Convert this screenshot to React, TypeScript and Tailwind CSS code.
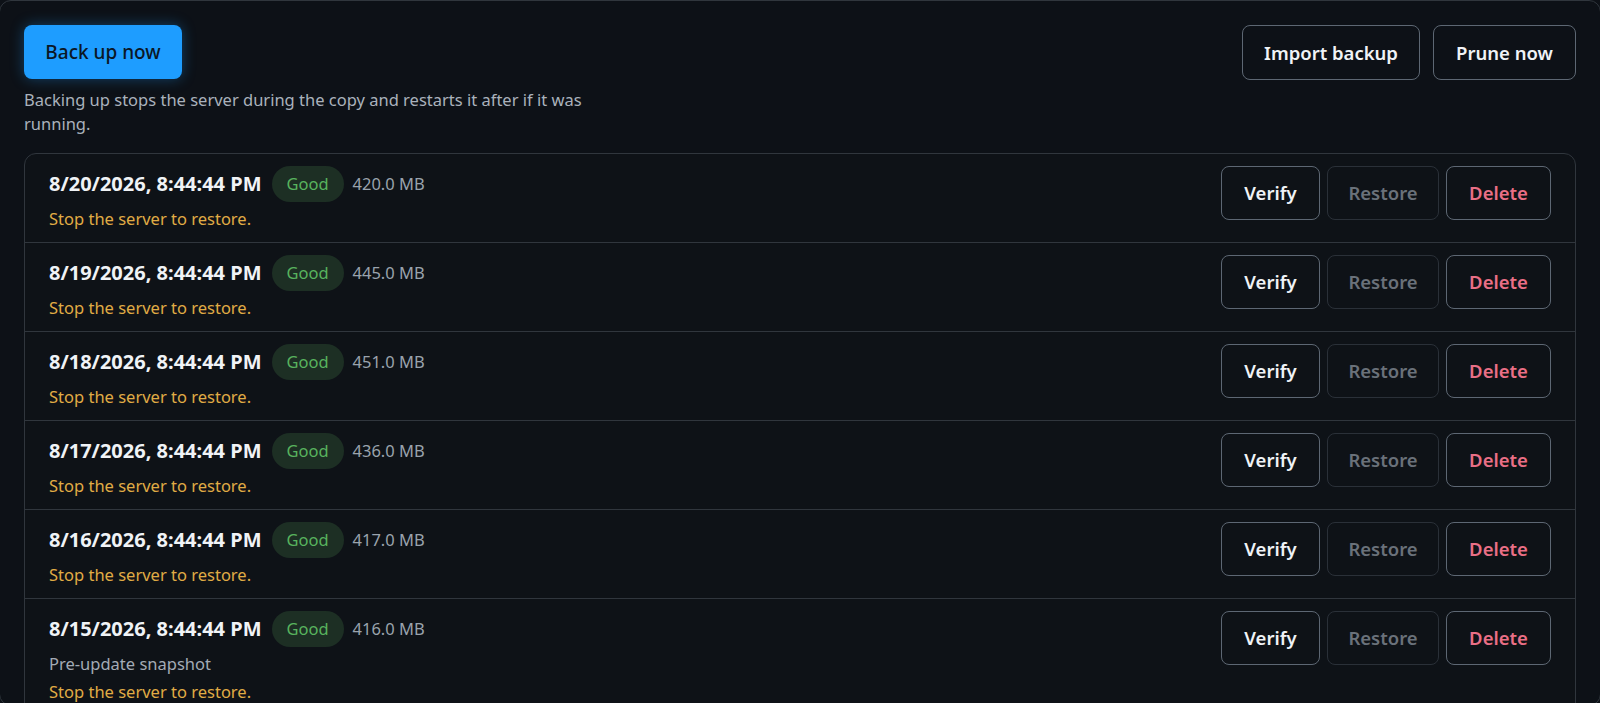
import React from "react"

type Backup = {
  date: string
  size: string
  note?: string
}

const backups: Backup[] = [
  { date: "8/20/2026, 8:44:44 PM", size: "420.0 MB" },
  { date: "8/19/2026, 8:44:44 PM", size: "445.0 MB" },
  { date: "8/18/2026, 8:44:44 PM", size: "451.0 MB" },
  { date: "8/17/2026, 8:44:44 PM", size: "436.0 MB" },
  { date: "8/16/2026, 8:44:44 PM", size: "417.0 MB" },
  { date: "8/15/2026, 8:44:44 PM", size: "416.0 MB", note: "Pre-update snapshot" },
]

const BackupRow = ({ item, first }: { item: Backup; first: boolean }) => {
  return (
    <div
      className={`flex items-start justify-between pl-6 pr-6 pt-3 pb-[11px] ${
        first ? "" : "border-t border-[#30363d]"
      }`}
    >
      <div className="flex flex-col">
        <div className="flex items-center h-[36px]">
          <span className="text-[20px] font-bold text-[#f0f3f6]">{item.date}</span>
          <span className="ml-[10px] h-[36px] w-[72px] justify-center flex items-center rounded-full bg-[#1d2f24] text-[#58b35e] text-[16.5px]">
            Good
          </span>
          <span className="ml-[9px] text-[16.5px] text-[#9aa3ad]">{item.size}</span>
        </div>
        {item.note && (
          <div className="mt-[5px] leading-6 text-[16.5px] text-[#a3abb5]">{item.note}</div>
        )}
        <div className={`${item.note ? "mt-1" : "mt-[5px]"} leading-6 text-[16.5px] text-[#e0ac45]`}>
          Stop the server to restore.
        </div>
      </div>

      <div className="flex gap-[7px]">
        <button className="h-[54px] w-[99px] rounded-lg border border-[#5d6773] text-[18.5px] font-semibold text-[#f0f3f6]">
          Verify
        </button>
        <button className="h-[54px] w-[112px] rounded-lg border border-[#2a3038] text-[18.5px] font-semibold text-[#6a717a]">
          Restore
        </button>
        <button className="h-[54px] w-[105px] rounded-lg border border-[#5d6773] text-[18.5px] font-semibold text-[#ea6f86]">
          Delete
        </button>
      </div>
    </div>
  )
}

export default function App() {
  return (
    <div
      className="h-[703px] overflow-hidden bg-[#0d1117]"
      style={{ fontFamily: '"Noto Sans", "Open Sans", sans-serif' }}
    >
      <div className="-ml-px w-[1602px] h-[706px] border border-[#30363d] rounded-xl bg-[#0d1117] px-6 pt-6">
        <div className="flex justify-between items-start">
          <div>
            <button className="h-[54px] w-[158px] rounded-lg bg-[#1e9dff] text-[19px] font-medium text-[#0b1726] shadow-[0_0_14px_rgba(30,157,255,0.35)]">
              Back up now
            </button>
            <p className="mt-[9px] max-w-[590px] text-[16.5px] leading-[23.5px] text-[#aab2bc]">
              Backing up stops the server during the copy and restarts it after if it was running.
            </p>
          </div>

          <div className="flex gap-[13px]">
            <button className="h-[55px] w-[178px] rounded-lg border border-[#5d6773] text-[18.5px] font-semibold text-[#f0f3f6]">
              Import backup
            </button>
            <button className="h-[55px] w-[143px] rounded-lg border border-[#5d6773] text-[18.5px] font-semibold text-[#f0f3f6]">
              Prune now
            </button>
          </div>
        </div>

        <div className="mt-[18px] rounded-xl border border-[#30363d] bg-[#0e1217]">
          {backups.map((b, i) => (
            <BackupRow key={b.date} item={b} first={i === 0} />
          ))}
        </div>
      </div>
    </div>
  )
}
